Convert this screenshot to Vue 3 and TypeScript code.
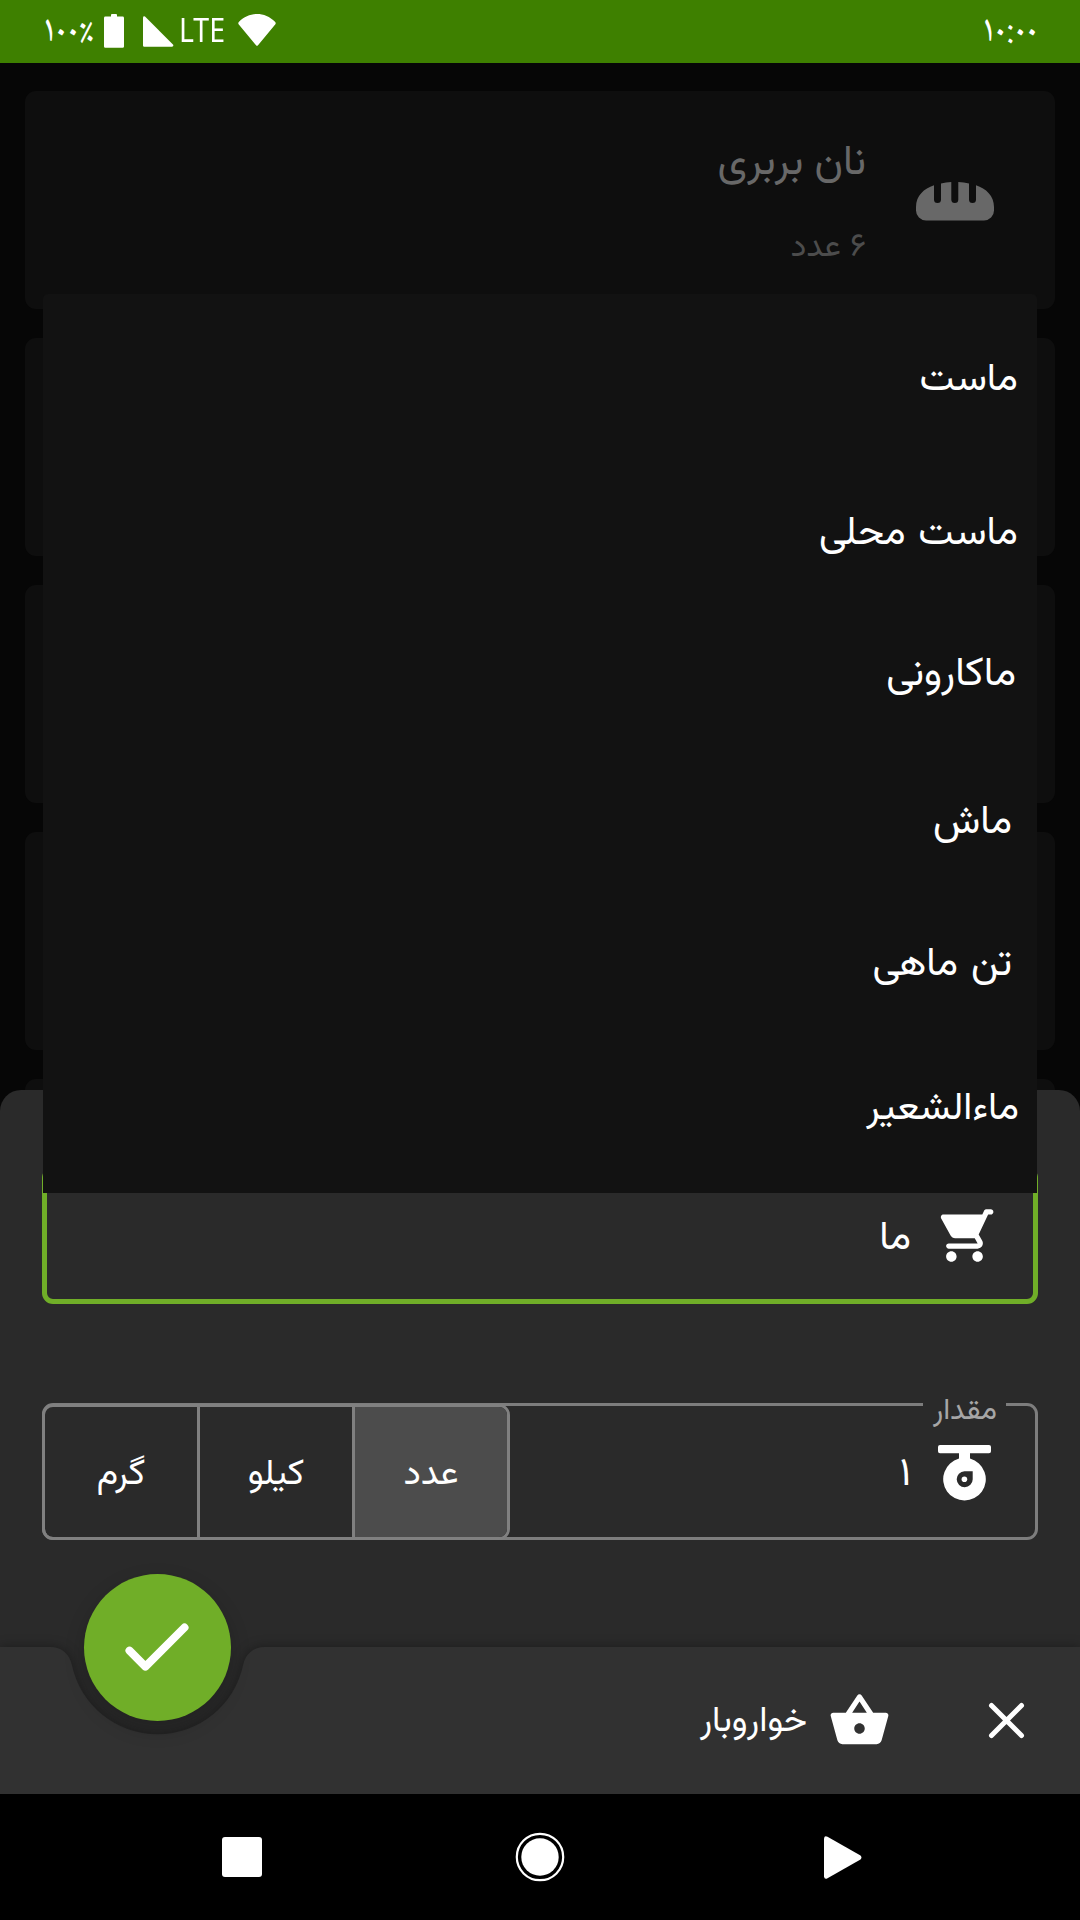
<script setup lang="ts">
interface Suggestion {
  name: string
  gap: number
  inset: number
  size: number
}

const suggestions: Suggestion[] = [
  { name: 'ماست', gap: 57, inset: 19, size: 39.2 },
  { name: 'ماست محلی', gap: 93, inset: 19, size: 39.7 },
  { name: 'ماکارونی', gap: 81, inset: 21, size: 40.5 },
  { name: 'ماش', gap: 88, inset: 25, size: 40 },
  { name: 'تن ماهی', gap: 82, inset: 25, size: 40 },
  { name: 'ماءالشعیر', gap: 85, inset: 18, size: 39 },
]

const units = ['عدد', 'کیلو', 'گرم']
const selectedUnit = 'عدد'
const query = 'ما'
const amount = '۱'
</script>

<template>
  <div class="screen" dir="rtl">
    <header class="status" dir="ltr">
      <span class="percent">۱۰۰٪</span>
      <svg class="battery" width="20" height="34" viewBox="0 0 20 34">
        <path d="M8 0h4a1 1 0 0 1 1 1v1.600h5.600A1.400 1.400 0 0 1 20 4v28.400a1.400 1.400 0 0 1-1.400 1.400H1.400A1.400 1.400 0 0 1 0 32.400V4a1.400 1.400 0 0 1 1.400-1.400H7V1a1 1 0 0 1 1-1z" />
      </svg>
      <svg class="signal" width="31" height="31" viewBox="0 0 31 31">
        <path d="M0 1.400Q.4-.2 2 .6L30.200 28.800Q30.800 30.400 29 30.700H1.200Q0 30.700 0 29.500z" />
      </svg>
      <span class="lte">LTE</span>
      <svg class="wifi" width="38" height="32" viewBox="0 0 38 32">
        <path d="M.6 10.200Q-.2 8.800 1 7.800C11-2.600 27-2.600 37 7.800Q38.200 8.800 37.400 10.200L20 31.200Q19 32.400 18 31.200z" />
      </svg>
      <span class="clock">۱۰:۰۰</span>
    </header>

    <main class="list">
      <article class="card">
        <svg class="bread" width="78" height="39" viewBox="0 0 78 39">
          <path d="M0 25C0 14 8 6.500 18 3.300V17.500a3.500 3.500 0 0 0 7 0V1.400Q30 .1 35.300 0V17.500a3.500 3.500 0 0 0 7 0V0Q48 .1 53 1.400V17.500a3.500 3.500 0 0 0 7 0V3.300C70 6.500 78 14 78 25V28.500A10 10 0 0 1 68 38.500H10A10 10 0 0 1 0 28.500z" />
        </svg>
        <div class="card-text">
          <h2>نان بربری</h2>
          <p>۶ عدد</p>
        </div>
      </article>
      <article v-for="n in 4" :key="n" class="card"></article>
    </main>

    <section class="sheet">
      <div class="field search">
        <svg class="icon flip" viewBox="0 0 24 24">
          <path d="M7 18c-1.100 0-1.990.9-1.990 2S5.900 22 7 22s2-.9 2-2-.9-2-2-2zM1 3c0 .55.45 1 1 1h1l3.600 7.590-1.350 2.440C4.520 15.370 5.480 17 7 17h11c.55 0 1-.45 1-1s-.45-1-1-1H7l1.100-2h7.450c.75 0 1.410-.41 1.750-1.030l3.580-6.490c.37-.66-.11-1.480-.87-1.480H5.210l-.67-1.430c-.16-.35-.52-.57-.9-.57H2c-.55 0-1 .45-1 1zm16 15c-1.100 0-1.990.9-1.990 2s.89 2 1.990 2 2-.9 2-2-.9-2-2-2z" />
        </svg>
        <span class="value">{{ query }}</span>
      </div>

      <div class="field amount">
        <label class="legend">مقدار</label>
        <svg class="icon" viewBox="0 0 63 63">
          <path fill-rule="evenodd" d="M7 5h49a2 2 0 0 1 2 2v4.300a2 2 0 0 1-2 2H37v5.300a21.300 21.300 0 1 1-11 0v-5.300H7a2 2 0 0 1-2-2V7a2 2 0 0 1 2-2zM31.500 31.200a8 8 0 1 0 8.200 8V31.200z" />
          <circle cx="31.400" cy="39.300" r="2.800" />
        </svg>
        <span class="value">{{ amount }}</span>
        <div class="units">
          <button v-for="u in units" :key="u" class="unit" :class="{ on: u === selectedUnit }">{{ u }}</button>
        </div>
      </div>

      <footer class="bar">
        <svg class="bar-bg" width="1080" height="187" viewBox="0 -40 1080 187">
          <path d="M0 0H50C62 0 69.500 7 71.900 18A87.500 87.500 0 0 0 243.100 18C245.500 7 253 0 265 0H1080V147H0z" />
        </svg>
        <svg class="icon close" viewBox="0 0 63 63">
          <path d="M16.500 16.500l30 30M46.500 16.500l-30 30" />
        </svg>
        <svg class="icon" viewBox="0 0 24 24">
          <path d="M22 9h-4.790l-4.380-6.560c-.19-.28-.51-.42-.83-.42s-.64.14-.83.430L6.790 9H2c-.55 0-1 .45-1 1 0 .09.01.18.04.27l2.540 9.270c.23.84 1 1.460 1.920 1.460h13c.92 0 1.690-.62 1.930-1.460l2.540-9.270L23 10c0-.55-.45-1-1-1zM12 4.800L14.800 9H9.200L12 4.800zM12 17c-1.100 0-2-.9-2-2s.9-2 2-2 2 .9 2 2-.9 2-2 2z" />
        </svg>
        <span class="category">خواروبار</span>
        <button class="fab">
          <svg width="147" height="147" viewBox="0 0 147 147">
            <path d="M45.500 76.700L61.400 92.600L100.500 53.500" />
          </svg>
        </button>
      </footer>
    </section>

    <ul class="suggestions">
      <li
        v-for="s in suggestions"
        :key="s.name"
        :style="{ marginTop: s.gap + 'px', paddingRight: s.inset + 'px', fontSize: s.size + 'px' }"
      >
        {{ s.name }}
      </li>
    </ul>

    <nav class="nav" dir="ltr">
      <svg width="40" height="40" viewBox="0 0 40 40"><rect width="40" height="40" rx="3" /></svg>
      <svg class="home" width="50" height="50" viewBox="0 0 50 50">
        <circle cx="25" cy="25" r="18.700" />
        <circle class="ring" cx="25" cy="25" r="23.200" />
      </svg>
      <svg width="38" height="43" viewBox="0 0 38 43"><path d="M0 2.500Q.5-.8 3.500.8L36.500 19.500Q38.300 21.500 36.500 23.500L3.500 42.200Q.5 43.800 0 40.500z" /></svg>
    </nav>
  </div>
</template>

<style>
body {
  background: #060606;
}
</style>

<style scoped>
.screen {
  position: relative;
  width: 1080px;
  height: 1920px;
  overflow: hidden;
  display: flex;
  flex-direction: column;
  background: #060606;
  color: #fff;
  font-family: Vazirmatn, 'Noto Sans Arabic', 'DejaVu Sans', sans-serif;
}
svg {
  display: block;
  flex: none;
  fill: #fff;
}
.status {
  flex: none;
  height: 63px;
  padding: 0 42px 0 43px;
  box-sizing: border-box;
  display: flex;
  align-items: flex-start;
  background: #3e8000;
}
.percent,
.clock {
  font-family: 'Noto Naskh Arabic UI', 'Noto Sans Arabic', 'DejaVu Sans', sans-serif;
  font-size: 38px;
  line-height: 63px;
  white-space: nowrap;
}
.percent {
  width: 61px;
}
.clock {
  margin-left: auto;
}
.battery {
  margin-top: 14px;
}
.signal {
  margin: 16px 0 0 19px;
}
.lte {
  width: 59px;
  margin-left: 5px;
  font: 32px/60px 'Noto Sans', sans-serif;
  transform: scaleX(0.89);
  transform-origin: 0 0;
}
.wifi {
  margin-top: 14px;
}
.list {
  flex: none;
  height: 1731px;
  padding: 28px 25px 0;
  box-sizing: border-box;
  display: flex;
  flex-direction: column;
  gap: 29px;
  overflow: hidden;
}
.card {
  flex: none;
  height: 218px;
  padding-right: 61px;
  box-sizing: border-box;
  display: flex;
  align-items: center;
  gap: 50px;
  border-radius: 11px;
  background: #0e0e0e;
}
.bread {
  margin-top: 3px;
  fill: #686868;
}
.card-text {
  height: 132px;
}
.card h2,
.card p {
  margin: 0;
  font-weight: 400;
  line-height: 60px;
}
.card h2 {
  font-size: 42px;
  color: #686868;
}
.card p {
  margin-top: 24px;
  font-size: 33px;
  color: #4c4c4c;
}
.sheet {
  position: absolute;
  top: 1090px;
  left: 0;
  right: 0;
  height: 704px;
  padding-top: 77px;
  box-sizing: border-box;
  display: flex;
  flex-direction: column;
  border-radius: 21px 21px 0 0;
  background: #2a2a2a;
}
.field {
  position: relative;
  flex: none;
  height: 137px;
  margin: 0 42px;
  box-sizing: border-box;
  display: flex;
  align-items: center;
  border: 3px solid #7d7d7d;
  border-radius: 11px;
  padding-right: 39px;
}
.field.search {
  border: 5px solid #70ae28;
  padding-right: 37px;
}
.field.amount {
  margin-top: 99px;
}
.icon {
  width: 63px;
  height: 63px;
}
.flip {
  transform: scaleX(-1);
}
.value {
  margin-right: 22px;
  padding-top: 7px;
  font-size: 40px;
  line-height: 60px;
}
.legend {
  position: absolute;
  top: -24px;
  right: 29px;
  width: 83px;
  height: 60px;
  padding-right: 9px;
  box-sizing: border-box;
  background: #2a2a2a;
  color: #a6a6a6;
  font-size: 30px;
  line-height: 60px;
}
.units {
  display: flex;
  align-self: stretch;
  margin: -2px auto -3px -3px;
  border: 3px solid #808080;
  border-radius: 11px;
  overflow: hidden;
}
.unit {
  width: 155px;
  padding: 5px 0 0;
  box-sizing: border-box;
  border: 0;
  border-right: 3px solid #808080;
  background: none;
  color: #fff;
  font: 36px/60px Vazirmatn, 'Noto Sans Arabic', 'DejaVu Sans', sans-serif;
}
.unit:first-child {
  width: 152px;
  border-right: 0;
}
.unit.on {
  background: #4c4c4c;
}
.bar {
  position: relative;
  flex: none;
  height: 147px;
  margin-top: auto;
  padding-right: 42px;
  display: flex;
  align-items: center;
}
.bar > .icon,
.category {
  position: relative;
}
.bar-bg {
  position: absolute;
  left: 0;
  top: -40px;
  fill: #313131;
  filter: drop-shadow(0 0 6px rgba(0, 0, 0, 0.35));
}
.close {
  margin-left: 84px;
  fill: none;
  stroke: #fff;
  stroke-width: 5px;
  stroke-linecap: round;
}
.category {
  margin-right: 21px;
  padding-top: 4px;
  font-size: 35.5px;
  line-height: 60px;
}
.fab {
  position: absolute;
  left: 84px;
  top: -73px;
  width: 147px;
  height: 147px;
  padding: 0;
  border: 0;
  border-radius: 50%;
  background: #70ae28;
  box-shadow: 0 8px 20px rgba(0, 0, 0, 0.2);
}
.fab svg {
  fill: none;
  stroke: #fff;
  stroke-width: 8px;
  stroke-linecap: round;
  stroke-linejoin: round;
}
.suggestions {
  position: absolute;
  top: 294px;
  left: 43px;
  width: 994px;
  height: 899px;
  margin: 0;
  padding: 0;
  box-sizing: border-box;
  display: flex;
  flex-direction: column;
  list-style: none;
  border-radius: 5px 5px 0 0;
  background: #121212;
}
.suggestions li {
  line-height: 60px;
  word-spacing: 2px;
}
.nav {
  flex: none;
  height: 126px;
  padding-left: 222px;
  box-sizing: border-box;
  display: flex;
  align-items: center;
  background: #000;
}
.home {
  margin: 0 259px 0 253px;
}
.ring {
  fill: none;
  stroke: #fff;
  stroke-width: 2.2px;
}
</style>
